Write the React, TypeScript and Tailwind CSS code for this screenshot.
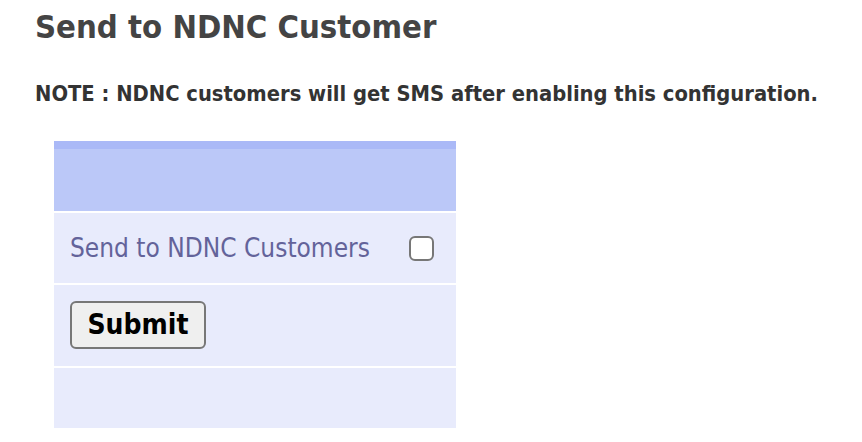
export default function App() {
  return (
    <div className="min-h-[442px] bg-white pl-[35px] pt-[7px] font-['DejaVu_Sans_Condensed','DejaVu_Sans',sans-serif]">
      <h2 className="text-[32.6px] leading-[40px] font-bold text-[#444444]">Send to NDNC Customer</h2>

      <p className="mt-[34px] text-[21.75px] leading-[26px] font-bold text-[#333333]">
        NOTE : NDNC customers will get SMS after enabling this configuration.
      </p>

      {/* settings table */}
      <div className="ml-[19px] mt-[34px] flex w-[402px] flex-col gap-[2px]">
        <div className="h-[70px] border-t-[8px] border-[#aab9f7] bg-[#bbc8f8]"></div>
        <div className="flex h-[70px] items-center justify-between bg-[#e8ebfc] pl-[16px] pr-[22px]">
          <span className="text-[26px] text-[#63639a]">Send to NDNC Customers</span>
          <span className="h-[25px] w-[25px] rounded-[6px] border-2 border-[#777777] bg-white"></span>
        </div>
        <div className="flex h-[81px] items-start bg-[#e8ebfc] pl-[16px] pt-[16px]">
          <button className="h-[48px] w-[136px] rounded-[6px] border-2 border-[#777777] bg-[#efefef] text-[28px] font-bold text-black">
            Submit
          </button>
        </div>
        <div className="h-[60px] bg-[#e8ebfc]"></div>
      </div>
    </div>
  );
}
